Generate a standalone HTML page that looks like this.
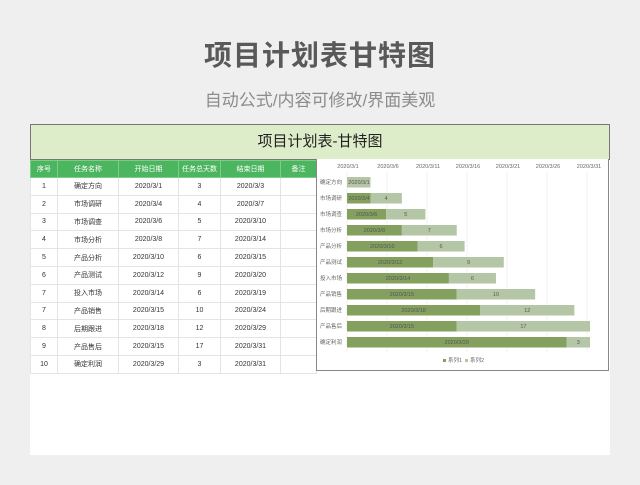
<!DOCTYPE html>
<html><head><meta charset="utf-8"><style>
body{margin:0;width:640px;height:485px;background:#efefef;font-family:"Liberation Sans","Noto Sans CJK SC",sans-serif;position:relative;overflow:hidden}
.t1{position:absolute;top:34px;width:640px;text-align:center;font-size:28px;font-weight:bold;color:#595959;letter-spacing:1px}
.t2{position:absolute;top:86px;width:640px;text-align:center;font-size:17px;color:#8c8c8c}
.panel{position:absolute;left:30px;top:124px;width:580px;height:331px;background:#fff}
.tb{position:absolute;left:30px;top:124px;width:578px;height:34px;background:#deedc9;border:1px solid #777;text-align:center;line-height:34px;font-size:15px;color:#222}
table{position:absolute;left:30px;top:160px;border-collapse:collapse;border:1px solid #666;font-size:7px;color:#333;table-layout:fixed}
td{border:1px solid #e4e4e4;text-align:center;height:16.8px;padding:0}
tr.h td{background:#4cb55f;color:#fff;height:16px;border-color:#7dcc8a}
.chart{position:absolute;left:316px;top:159px;width:291px;height:211px;border:1px solid #888;border-top:none;background:#fff}
</style></head><body>
<div class="t1">项目计划表甘特图</div>
<div class="t2">自动公式/内容可修改/界面美观</div>
<div class="panel"></div>
<div class="tb">项目计划表-甘特图</div>
<table>
<colgroup><col style="width:27px"><col style="width:61px"><col style="width:60px"><col style="width:42px"><col style="width:60px"><col style="width:36px"></colgroup>
<tr class="h"><td>序号</td><td>任务名称</td><td>开始日期</td><td>任务总天数</td><td>结束日期</td><td>备注</td></tr>
<tr><td>1</td><td>确定方向</td><td>2020/3/1</td><td>3</td><td>2020/3/3</td><td></td></tr>
<tr><td>2</td><td>市场调研</td><td>2020/3/4</td><td>4</td><td>2020/3/7</td><td></td></tr>
<tr><td>3</td><td>市场调查</td><td>2020/3/6</td><td>5</td><td>2020/3/10</td><td></td></tr>
<tr><td>4</td><td>市场分析</td><td>2020/3/8</td><td>7</td><td>2020/3/14</td><td></td></tr>
<tr><td>5</td><td>产品分析</td><td>2020/3/10</td><td>6</td><td>2020/3/15</td><td></td></tr>
<tr><td>6</td><td>产品测试</td><td>2020/3/12</td><td>9</td><td>2020/3/20</td><td></td></tr>
<tr><td>7</td><td>投入市场</td><td>2020/3/14</td><td>6</td><td>2020/3/19</td><td></td></tr>
<tr><td>7</td><td>产品销售</td><td>2020/3/15</td><td>10</td><td>2020/3/24</td><td></td></tr>
<tr><td>8</td><td>后期跟进</td><td>2020/3/18</td><td>12</td><td>2020/3/29</td><td></td></tr>
<tr><td>9</td><td>产品售后</td><td>2020/3/15</td><td>17</td><td>2020/3/31</td><td></td></tr>
<tr><td>10</td><td>确定利润</td><td>2020/3/29</td><td>3</td><td>2020/3/31</td><td></td></tr>
</table>
<div class="chart"></div>
<svg style="position:absolute;left:0;top:0" width="640" height="485" font-family="Liberation Sans,Noto Sans CJK SC,sans-serif">
<g stroke="#ececec" stroke-width="0.7">
<line x1="347" y1="172" x2="347" y2="352"/><line x1="387" y1="172" x2="387" y2="352"/><line x1="427" y1="172" x2="427" y2="352"/><line x1="467" y1="172" x2="467" y2="352"/><line x1="507" y1="172" x2="507" y2="352"/><line x1="547" y1="172" x2="547" y2="352"/><line x1="587" y1="172" x2="587" y2="352"/>
</g>
<g font-size="5.5" fill="#666" text-anchor="middle">
<text x="348" y="168">2020/3/1</text><text x="388" y="168">2020/3/6</text><text x="428" y="168">2020/3/11</text><text x="468" y="168">2020/3/16</text><text x="508" y="168">2020/3/21</text><text x="548" y="168">2020/3/26</text><text x="589" y="168">2020/3/31</text>
</g>
<g id="bars" font-size="5.5" text-anchor="middle" fill="#555"></g>
<g font-size="5.5" fill="#666"><rect x="443" y="359" width="3" height="3" fill="#84a05e"/><text x="448" y="362">系列1</text><rect x="465" y="359" width="3" height="3" fill="#b5c6a6"/><text x="470" y="362">系列2</text></g>
</svg>
<script>
var d=[["确定方向",0,3,"2020/3/1"],["市场调研",3,4,"2020/3/4"],["市场调查",5,5,"2020/3/6"],["市场分析",7,7,"2020/3/8"],["产品分析",9,6,"2020/3/10"],["产品测试",11,9,"2020/3/12"],["投入市场",13,6,"2020/3/14"],["产品销售",14,10,"2020/3/15"],["后期跟进",17,12,"2020/3/18"],["产品售后",14,17,"2020/3/15"],["确定利润",28,3,"2020/3/29"]];
var s="",k=7.84;
d.forEach(function(r,i){var y=177+i*16,a=347+r[1]*k,b=r[2]*k;
s+='<text x="320" y="'+(y+7)+'" text-anchor="start" fill="#666">'+r[0]+'</text>';
s+='<rect x="347" y="'+y+'" width="'+(r[1]*k)+'" height="10.5" fill="#84a05e"/>';
s+='<rect x="'+a+'" y="'+y+'" width="'+b+'" height="10.5" fill="#b5c6a6"/>';
s+='<text x="'+Math.max(359,(347+a)/2)+'" y="'+(y+7)+'">'+r[3]+'</text>';
if(i>0)s+='<text x="'+(a+b/2)+'" y="'+(y+7)+'">'+r[2]+'</text>';});
document.getElementById("bars").innerHTML=s;
</script>
</body></html>
